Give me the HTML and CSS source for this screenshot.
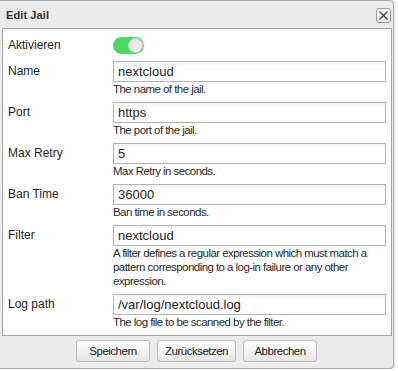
FILE: index.html
```html
<!DOCTYPE html>
<html lang="de">
<head>
  <meta charset="UTF-8" />
  <title>Edit Jail</title>
  <link rel="stylesheet" href="styles.css">
</head>
<body>
  <div class="dialog">
    <div class="titlebar">
      <span class="title">Edit Jail</span>
      <button class="close" title="Schließen">
        <svg width="9" height="9" viewBox="0 0 9 9">
          <path d="M0.5 0.5 L8.5 8.5 M8.5 0.5 L0.5 8.5" stroke="#3a3a3a" stroke-width="1.2" fill="none" />
        </svg>
      </button>
    </div>

    <div class="panel">
      <label class="label label-toggle">Aktivieren</label>
      <div class="toggle-cell">
        <span class="toggle on"><span class="knob"></span></span>
      </div>

      <label class="label" for="name">Name</label>
      <div class="field">
        <input id="name" type="text" value="nextcloud" />
        <div class="help">The name of the jail.</div>
      </div>

      <label class="label" for="port">Port</label>
      <div class="field">
        <input id="port" type="text" value="https" />
        <div class="help">The port of the jail.</div>
      </div>

      <label class="label" for="maxretry">Max Retry</label>
      <div class="field">
        <input id="maxretry" type="text" value="5" />
        <div class="help">Max Retry in seconds.</div>
      </div>

      <label class="label" for="bantime">Ban Time</label>
      <div class="field">
        <input id="bantime" type="text" value="36000" />
        <div class="help">Ban time in seconds.</div>
      </div>

      <label class="label" for="filter">Filter</label>
      <div class="field">
        <input id="filter" type="text" value="nextcloud" />
        <div class="help">A filter defines a regular expression which must match a pattern corresponding to a log-in failure or any other expression.</div>
      </div>

      <label class="label" for="logpath">Log path</label>
      <div class="field">
        <input id="logpath" type="text" value="/var/log/nextcloud.log" />
        <div class="help">The log file to be scanned by the filter.</div>
      </div>
    </div>

    <div class="footer">
      <button class="btn">Speichern</button>
      <button class="btn">Zurücksetzen</button>
      <button class="btn">Abbrechen</button>
    </div>
  </div>
</body>
</html>
```

FILE: styles.css
```css
body {
  margin: 0;
  padding: 0;
  background: #fff;
  font-family: "Liberation Sans", Arial, sans-serif;
  color: #222;
}
.dialog {
  width: 395px;
  margin: 0 0 0 -1px;
  box-sizing: border-box;
  background: #ebebeb;
  border: 1px solid #a9a9a9;
  border-radius: 0 4px 4px 0;
  box-shadow: 1px 1px 3px rgba(0,0,0,0.12);
}
.titlebar {
  height: 27px;
  display: flex;
  align-items: center;
  justify-content: space-between;
  padding: 0 2px 0 6px;
}
.title {
  font-size: 11px;
  font-weight: bold;
  color: #333;
  letter-spacing: 0.1px;
  margin-top: 1px;
}
.close {
  width: 15px;
  height: 15px;
  padding: 0;
  margin-top: 2px;
  display: flex;
  align-items: center;
  justify-content: center;
  border: 1px solid #9c9c9c;
  border-radius: 3px;
  background: linear-gradient(#ffffff, #ececec);
}
.panel {
  margin: 0 1px 0 2px;
  background: #fff;
  border: 1px solid #a4a4a4;
  padding: 8px 5px 6px 5px;
  display: grid;
  grid-template-columns: 105px 1fr;
  row-gap: 6px;
}
.label {
  font-size: 12px;
  line-height: 21px;
  color: #1e1e1e;
}
.label-toggle {
  line-height: 17px;
}
.toggle-cell {
  height: 18px;
}
.toggle {
  display: block;
  width: 31px;
  height: 17px;
  box-sizing: border-box;
  border-radius: 9px;
  background: #ccc;
  position: relative;
}
.toggle.on {
  background: #4cd964;
}
.knob {
  position: absolute;
  top: 1px;
  right: 1px;
  width: 15px;
  height: 15px;
  box-sizing: border-box;
  border-radius: 50%;
  background: #e9e9e9;
  border: 1px solid #cfcfcf;
}
.field input {
  display: block;
  width: 273px;
  height: 21px;
  box-sizing: border-box;
  margin: 0;
  padding: 0 4px;
  border: 1px solid #b3b3b3;
  background: linear-gradient(#f3f3f3, #ffffff 5px);
  font-family: "Liberation Sans", Arial, sans-serif;
  font-size: 13px;
  color: #1e1e1e;
  outline: none;
}
.help {
  font-size: 11.5px;
  line-height: 14px;
  letter-spacing: -0.55px;
  color: #2a2a2a;
}
.footer {
  display: flex;
  justify-content: center;
  gap: 7px;
  padding: 4px 0 6px;
}
.btn {
  min-width: 74px;
  height: 22px;
  padding: 0 7px;
  border: 1px solid #bdbdbd;
  border-radius: 3px;
  background: linear-gradient(#ffffff, #e6e6e6);
  font-family: "Liberation Sans", Arial, sans-serif;
  font-size: 11.5px;
  letter-spacing: -0.5px;
  color: #222;
  cursor: pointer;
}
.btn:hover {
  background: linear-gradient(#ffffff, #dcdcdc);
}
```
